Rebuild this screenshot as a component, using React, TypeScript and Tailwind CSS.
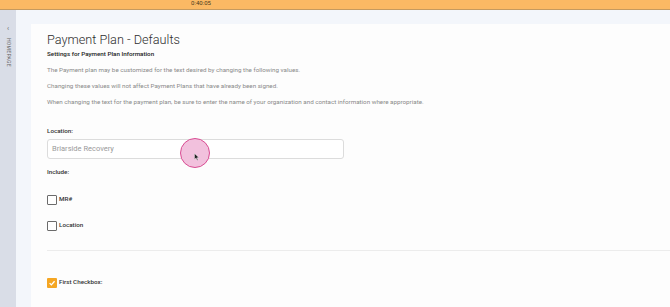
import React from "react";

const font = { fontFamily: "Roboto, 'Liberation Sans', sans-serif" };

const Checkbox = ({ label, checked }: { label: string; checked?: boolean }) => (
  <div className="flex items-center gap-[2px] h-[10px]">
    {checked ? (
      <div className="w-[10px] h-[10px] rounded-[1px] bg-[#f5a623] flex items-center justify-center">
        <svg width="8" height="8" viewBox="0 0 10 10">
          <path d="M2 5.2 L4.2 7.4 L8.2 2.8" stroke="#fff" strokeWidth="1.6" fill="none" />
        </svg>
      </div>
    ) : (
      <div className="w-[10px] h-[10px] rounded-[1px] border border-[#6b6b6b] bg-white" />
    )}
    <span className="text-[6.25px] leading-[8px] font-medium text-[#333] -mt-[2px]">{label}</span>
  </div>
);

const App = () => {
  return (
    <div className="w-[670px] h-[307px] overflow-hidden bg-[#f3f6fb] flex flex-col" style={font}>
      {/* recording bar */}
      <div className="h-[10px] bg-[#fbb964] border-b border-[#c59a5f] flex items-center justify-center shrink-0">
        <span className="text-[6px] leading-none text-[#4a3a20] -mt-[3px] ml-[-268px]">0:40:05</span>
      </div>
      <div className="flex flex-1 min-h-0">
        <div className="w-[16px] bg-[#d9dde7] flex flex-col items-center pt-[16px] shrink-0">
          <span className="text-[7px] text-[#666] leading-none">‹</span>
          <span
            className="mt-[5px] text-[5px] leading-none text-[#666] tracking-[0.3px]"
            style={{ writingMode: "vertical-rl" }}
          >
            HOMEPAGE
          </span>
        </div>
        <div className="flex-1 pl-[15px] pt-[14px]">
          <div className="relative h-full bg-[#fdfdfd] pl-[16px] pt-[8px]">
            <h1 className="text-[12.7px] font-light text-[#2e2e2e] leading-[16px]">Payment Plan - Defaults</h1>
            <p className="text-[6.25px] leading-[8px] font-medium text-[#222] mt-[2px]">Settings for Payment Plan Information</p>
            <div className="text-[6.25px] text-[#8a8a8a] mt-[8px] flex flex-col gap-[8px] leading-[8px]">
              <p>The Payment plan may be customized for the text desired by changing the following values.</p>
              <p>Changing these values will not affect Payment Plans that have already been signed.</p>
              <p>When changing the text for the payment plan, be sure to enter the name of your organization and contact information where appropriate.</p>
            </div>
            <p className="text-[6.25px] leading-[8px] font-medium text-[#333] mt-[21px]">Location:</p>
            <div className="mt-[4px] w-[297px] h-[20px] border border-[#dcdcdc] rounded-[3px] bg-white flex items-center px-[4px]">
              <span className="text-[7.5px] text-[#9a9a9a]">Briarside Recovery</span>
            </div>
            <p className="text-[6.25px] leading-[8px] font-medium text-[#333] mt-[9px]">Include:</p>
            <div className="mt-[19px] flex flex-col gap-[16px]">
              <Checkbox label="MR#" />
              <Checkbox label="Location" />
            </div>
            <div className="mt-[19px] border-t border-[#ececec]" />
            <div className="mt-[27px]">
              <Checkbox label="First Checkbox:" checked />
            </div>
            {/* click indicator */}
            <div className="absolute left-[149px] top-[114px] w-[30px] h-[30px] rounded-full bg-[#f2c1dd] border border-[#d94d93]">
              <svg className="absolute left-[13px] top-[14px]" width="6" height="8" viewBox="0 0 6 8">
                <path d="M0.5 0.5 L0.5 6.5 L2 5 L3.2 7.5 L4 7.1 L2.9 4.7 L5 4.7 Z" fill="#222" stroke="#fff" strokeWidth="0.4" />
              </svg>
            </div>
          </div>
        </div>
      </div>
    </div>
  );
};

export default App;
